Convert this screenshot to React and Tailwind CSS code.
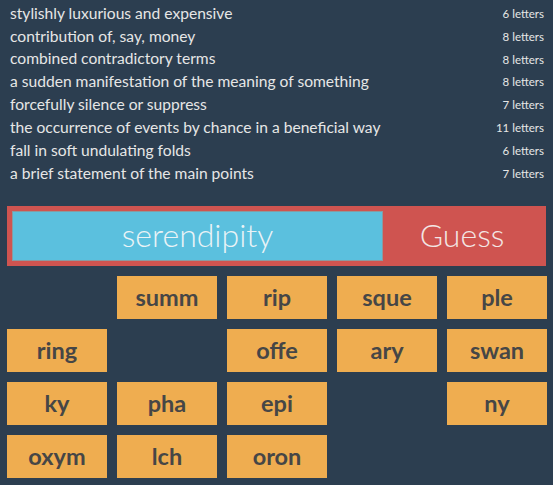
import React from 'react';

const CLUES = [
  ['stylishly luxurious and expensive', 6],
  ['contribution of, say, money', 8],
  ['combined contradictory terms', 8],
  ['a sudden manifestation of the meaning of something', 8],
  ['forcefully silence or suppress', 7],
  ['the occurrence of events by chance in a beneficial way', 11],
  ['fall in soft undulating folds', 6],
  ['a brief statement of the main points', 7],
];

const TILES = [
  null, 'summ', 'rip', 'sque', 'ple',
  'ring', null, 'offe', 'ary', 'swan',
  'ky', 'pha', 'epi', null, 'ny',
  'oxym', 'lch', 'oron', null, null,
];

export default function App() {
  return (
    <div className="w-[553px] h-[485px] bg-[#2c3e50] overflow-hidden font-['Lato','Open_Sans',sans-serif]">
      <div className="pt-[2px] pl-[10px] pr-[9px]">
        {CLUES.map(([clue, n], i) => (
          <div key={i} className="h-[22.86px] flex items-center justify-between">
            <span className="text-[15.6px] text-[#e6e6e6]">{clue}</span>
            <span className="text-[11.5px] text-[#e6e6e6]">{n} letters</span>
          </div>
        ))}
      </div>
      <div className="mt-[21px] mx-[7px] w-[539px] h-[60px] bg-[#cf5450] p-[5px] flex">
        <div className="w-[371px] h-[50px] bg-[#5bc0de] border border-[#8a9aa0] flex items-center justify-center">
          <span className="text-[32px] font-light text-[#eaf3f6] leading-none pb-[2px]">serendipity</span>
        </div>
        <div className="flex-1 flex items-center justify-center">
          <span className="text-[32px] font-light text-[#f3e6e4] leading-none pb-[2px]">Guess</span>
        </div>
      </div>
      <div className="mt-[10px] ml-[7px] grid grid-cols-[repeat(5,100px)] auto-rows-[43px] gap-[10px]">
        {TILES.map((t, i) =>
          t ? (
            <div key={i} className="bg-[#efad50] flex items-center justify-center">
              <span className="text-[23.5px] font-bold text-[#464646]">{t}</span>
            </div>
          ) : (
            <div key={i} />
          )
        )}
      </div>
    </div>
  );
}
